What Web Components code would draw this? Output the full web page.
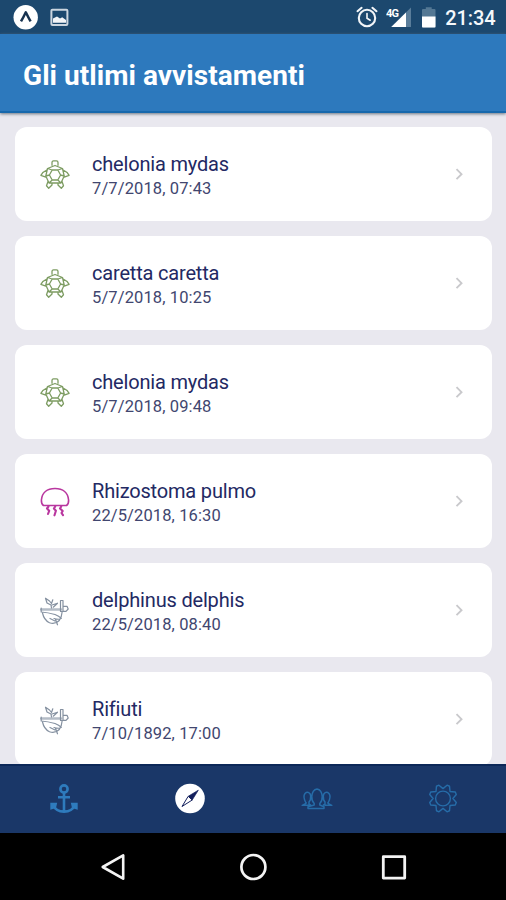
<!DOCTYPE html>
<html lang="it">
<head>
<meta charset="utf-8">
<title>Gli utlimi avvistamenti</title>
<style>
html,body{margin:0;height:100%;overflow:hidden;background:#000}
body{font-family:Roboto,sans-serif}
</style>
</head>
<body>
<sighting-app></sighting-app>
<script>
const define = (name, html) => {
  const t = document.createElement('template');
  t.innerHTML = html;
  customElements.define(name, class extends HTMLElement {
    constructor(){ super(); this.attachShadow({mode:'open'}).append(t.content.cloneNode(true)); }
  });
};

const icons = {
  turtle: `<svg width="30" height="30" viewBox="0 0 30 30" fill="none" stroke="#7d9c62" stroke-width="1.3" stroke-linejoin="round">
    <path d="M12 5.7V2.6Q12 .9 13.5 .9H16.5Q18 .9 18 2.6V5.7M7.5 8.5 15 5.5 22.5 8.5 24.2 16 21 23H9L5.8 16ZM12.2 10H17.8L20.6 15 17.8 20H12.2L9.4 15ZM17.8 10 22.5 8.5M20.6 15 24.2 16M17.8 20 21 23M9 23 12.2 20M7.5 8.5 12.2 10M5.8 16 9.4 15M6.8 10.2Q2.5 12 .9 15.4L5.8 17.2M23.2 10.2Q27.5 12 29.1 15.4L24.2 17.2M8 21.5 6.5 25.8 8.7 28.3 12 25V23M22 21.5 23.5 25.8 21.3 28.3 18 25V23"/></svg>`,
  jelly: `<svg width="30" height="30" viewBox="0 0 30 30" fill="none" stroke="#b9379f" stroke-width="1.6" stroke-linecap="round" stroke-linejoin="round">
    <path d="M3.5 18.5Q1.2 17 1.4 13C2 6 7 1.5 15 1.5S28 6 28.6 13Q28.8 17 26.5 18.5Z"/><path stroke-width="2.1" d="M8.5 19.5 7 21.5 9.2 23.8 8 27M15.2 19.5 13.9 21.5 15.9 23.8 14.5 28.3M21.2 19.5 20 21.5 22.7 24 21.5 26 23 28.2"/></svg>`,
  dolphin: `<svg width="30" height="30" viewBox="0 0 30 30" fill="none" stroke="#8490a0" stroke-width="1.2" stroke-linecap="round" stroke-linejoin="round">
    <path d="M1.2 13.5H21" stroke="#b4bcc6" stroke-width="2.6"/>
    <path d="M1.2 12V16Q8 16.5 15 18.5 19 20 21.3 22.3M2.5 17Q4 24 9.5 26.8 15 28.8 19.3 24.5 21.8 21 22.2 15.5M14 22.5Q17 23.5 20 23.2M15.3 22.8 17.5 28.8M10 22.5 15 25M11.5 12 11 9 7 7 5.5 2.2 9.5 5 11.5 7.5 12.8 3.8M12 9 17.5 7.2 13.2 11.2M20.5 4.5V15.5H23V4.5ZM23 10.3H27L28.2 13 26 15.3H23"/></svg>`
};

define('status-bar', `<style>
:host{display:flex;align-items:center;height:34px;background:#1c486e;color:#f5f8fb;box-sizing:border-box;padding:0 10.5px 0 13px}
svg{display:block;flex:none}.left{display:flex;align-items:center;gap:12px}.right{display:flex;align-items:center;margin-left:auto}
.time{font-size:20px;line-height:34px;font-weight:500;letter-spacing:-.1px;margin-left:8.5px;padding-top:2px}
</style>
<div class="left">
<svg width="25" height="26" viewBox="0 0 25 26"><circle cx="12.7" cy="13.3" r="12.2" fill="#fff"/><path d="M8 17.4Q10.4 13.4 12.8 8.3 15.3 13.4 17.6 17.4" fill="none" stroke="#17324f" stroke-width="2.5" stroke-linejoin="round"/></svg>
<svg width="19" height="18" viewBox="0 0 19 18"><rect x="1.4" y="1.8" width="16" height="15.2" rx="1" fill="none" stroke="#cbd5df" stroke-width="2"/><path d="M3 14.7V10.5l4-2 3 2 2.2-1.3 3.8 2.8v2.7Z" fill="#f2f4f7"/></svg>
</div>
<div class="right">
<svg width="22" height="22" viewBox="0 0 22 22" fill="none" stroke="#f2f5f8" stroke-width="2.1" stroke-linecap="round"><circle cx="11" cy="12" r="8.2"/><path d="M1.5 5.2 5.6 1.8M20.5 5.2 16.4 1.8"/><path stroke-width="1.6" d="M11 7.5V12.3L14.2 14.2"/></svg>
<svg width="27" height="22" viewBox="0 0 27 22" style="margin-left:8px"><path d="M25 1.5V21H5Z" fill="#5a7d9a"/><path d="M20 6.5V21H5.3Z" fill="#fff"/><text x="0" y="10.5" font-family="Roboto" font-size="11" font-weight="700" letter-spacing="-.8" fill="#fff" stroke="#1c486e" stroke-width="1.6" paint-order="stroke">4G</text></svg>
<svg width="16" height="22" viewBox="0 0 16 22" style="margin-left:8px"><path d="M1 21.5V4Q1 3.1 2 3.1H4.8V1.2H10.7V3.1H13.5Q14.5 3.1 14.5 4V21.5Z" fill="#547894"/><path d="M1 10.5H14.5V20.5Q14.5 21.5 13.5 21.5H2Q1 21.5 1 20.5Z" fill="#fff"/></svg>
<span class="time">21:34</span></div>`);

define('title-bar', `<style>
:host{display:flex;align-items:center;height:79px;box-sizing:border-box;padding:6px 23px 0;background:#2d79bd;border-bottom:2px solid #1768ac;color:#fff;font-size:28px;font-weight:700;letter-spacing:.05px;box-shadow:0 1px 3px #6b7580;position:relative}
</style><slot></slot>`);

customElements.define('sighting-card', class extends HTMLElement {
  constructor(){
    super();
    this.attachShadow({mode:'open'}).innerHTML = `<style>
:host{display:flex;align-items:center;flex:none;height:94px;border-radius:12px;background:#fff;box-sizing:border-box;padding:0 27px 0 25px;color:#232963}
.icon{flex:none;width:30px;height:30px;margin-top:2px}.icon svg,.chev{display:block}
.text{flex:1;margin-left:22px;padding-top:4px}
.name{font-size:20px;line-height:25px;letter-spacing:-.18px;white-space:nowrap}
.date{font-size:16.5px;line-height:23px;letter-spacing:.12px;color:#41466f;white-space:nowrap}
</style><div class="icon">${icons[this.getAttribute('icon')]}</div>
<div class="text"><div class="name"><slot></slot></div><div class="date"><slot name="date"></slot></div></div>
<svg class="chev" width="12" height="14" viewBox="0 0 12 14" fill="none" stroke="#c9c9cc" stroke-width="1.9"><path d="M3.5 2.2 8.5 7.2 3.5 12.2"/></svg>`;
  }
});

define('sighting-list', `<style>:host{display:flex;flex-direction:column;gap:15px;height:651px;box-sizing:border-box;padding:14px 14px 0 15px;background:#e9e8ef;overflow:hidden}</style><slot></slot>`);

define('tab-bar', `<style>
:host{display:grid;grid-template-columns:repeat(4,1fr);height:69px;background:#1a3768;border-top:2px solid #0c2858;box-sizing:border-box;padding:0 0 1px 1px}
div{display:grid;place-items:center}svg{display:block}
</style>
<div><svg width="30" height="32" viewBox="0 0 30 32" fill="none" stroke="#2e7bbd" stroke-width="2.6"><circle cx="15" cy="6" r="3.6"/><path d="M15 9.5V29M9 14.3H21M4 22Q7 28.6 15 28.6T26 22"/><path d="M1.3 19.8H8.2L7 25 1.3 26.8ZM28.7 19.8H21.8L23 25 28.7 26.8Z" fill="#2e7bbd" stroke="none"/></svg></div>
<div><svg width="32" height="32" viewBox="0 0 32 32"><circle cx="16" cy="15.5" r="14.8" fill="#fff"/><path d="M24.3 7.2 18.2 17 14.2 13.3Z" fill="#121f5c" stroke="#121f5c" stroke-width=".7"/><path d="M14.2 13.3 18.2 17 8 23.5Z" fill="#fff" stroke="#121f5c" stroke-width="1"/></svg></div>
<div><svg width="32" height="30" viewBox="0 0 32 30" fill="none" stroke="#266ca8" stroke-width="1.5" stroke-linejoin="round"><path d="M13.2 19.5Q10.6 17 10.8 12.5 11.3 5.5 16 4.9 20.7 5.5 21.2 12.5 21.4 17 18.8 19.5V21L23 22.8V24.6H7V22.8L13.2 21ZM5 19Q1.5 12.5 4 9.5 6.5 7 9 9.7 10.5 12 9.3 16L8 18V20L10 21.3M27 19Q30.5 12.5 28 9.5 25.5 7 23 9.7 21.5 12 22.7 16L24 18V20L22 21.3M5 18V19.3L1.2 21.3H8.5M27 18V19.3L30.8 21.3H23.5"/></svg></div>
<div><svg width="30" height="30" viewBox="0 0 30 30" fill="none" stroke="#266ca8" stroke-width="1.4" stroke-linejoin="round"><circle cx="15" cy="14.5" r="7.4"/><path id="gear"/></svg></div>`);

define('system-nav', `<style>
:host{display:grid;grid-template-columns:repeat(3,140px);justify-content:center;height:67px;background:#000}
div{display:grid;place-items:center}svg{display:block}
</style>
<div><svg width="30" height="30" viewBox="0 0 30 30" fill="none" stroke="#f4f4f4" stroke-width="2.6" stroke-linejoin="round"><path d="M25.2 3.3V26.7L4.7 15Z"/></svg></div>
<div><svg width="30" height="30" viewBox="0 0 30 30" fill="none" stroke="#f4f4f4" stroke-width="2.7"><circle cx="15.4" cy="15" r="12"/></svg></div>
<div><svg width="30" height="30" viewBox="0 0 30 30" fill="none" stroke="#f4f4f4" stroke-width="2.8" stroke-linejoin="round"><rect x="5.3" y="4.7" width="21.4" height="21.4"/></svg></div>`);

const rows = [
  ['turtle','chelonia mydas','7/7/2018, 07:43'],
  ['turtle','caretta caretta','5/7/2018, 10:25'],
  ['turtle','chelonia mydas','5/7/2018, 09:48'],
  ['jelly','Rhizostoma pulmo','22/5/2018, 16:30'],
  ['dolphin','delphinus delphis','22/5/2018, 08:40'],
  ['dolphin','Rifiuti','7/10/1892, 17:00']
];
define('sighting-app', `<style>:host{display:flex;flex-direction:column;width:506px;height:900px;overflow:hidden;background:#000}
status-bar,title-bar,sighting-list,tab-bar,system-nav{flex:none}</style>
<status-bar></status-bar><title-bar>Gli utlimi avvistamenti</title-bar>
<sighting-list>${rows.map(r=>`<sighting-card icon="${r[0]}">${r[1]}<span slot="date">${r[2]}</span></sighting-card>`).join('')}</sighting-list>
<tab-bar></tab-bar><system-nav></system-nav>`);

// Eight-toothed outline: each tooth narrows to a short tip.
const gear = document.querySelector('sighting-app').shadowRoot.querySelector('tab-bar').shadowRoot.querySelector('#gear');
const pts = [];
for (let i = 0; i < 8; i++) {
  for (const [o, r] of [[0,9.9],[17,13.9],[28,13.9]]) {
    const a = (i*45 + o) * Math.PI / 180;
    pts.push((15 + r*Math.cos(a)).toFixed(2) + ' ' + (14.5 + r*Math.sin(a)).toFixed(2));
  }
}
gear.setAttribute('d', 'M' + pts.join('L') + 'Z');
</script>
</body>
</html>
